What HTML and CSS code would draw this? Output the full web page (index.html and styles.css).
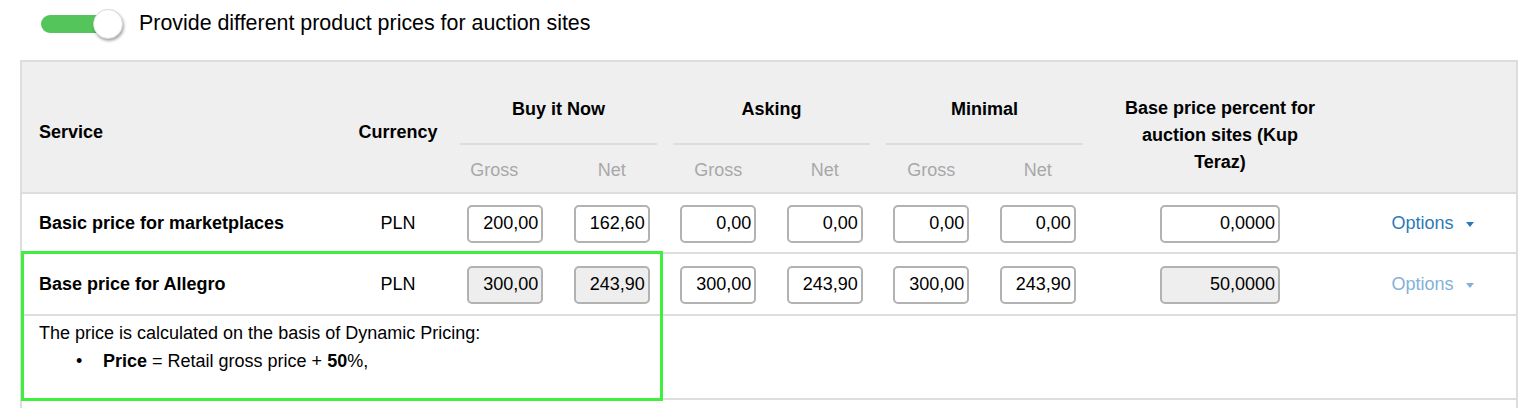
FILE: index.html
```html
<!DOCTYPE html>
<html lang="en">
<head>
  <meta charset="UTF-8">
  <title>Auction prices</title>
  <link rel="stylesheet" href="styles.css">
</head>
<body>
  <div class="page">
    <div class="auction-toggle">
      <span class="switch">
        <span class="switch-track"></span>
        <span class="switch-knob"></span>
      </span>
      <span class="auction-toggle-label">Provide different product prices for auction sites</span>
    </div>

    <div class="price-table-wrap">
      <table class="price-table">
        <colgroup>
          <col class="w-service">
          <col class="w-currency">
          <col class="w-sub"><col class="w-sub">
          <col class="w-sub"><col class="w-sub">
          <col class="w-sub"><col class="w-sub">
          <col class="w-percent">
          <col class="w-options">
        </colgroup>
        <thead>
          <tr class="head-main">
            <th rowspan="2" class="col-service">Service</th>
            <th rowspan="2" class="col-currency">Currency</th>
            <th colspan="2" class="col-group"><div class="group-title">Buy it Now</div></th>
            <th colspan="2" class="col-group"><div class="group-title">Asking</div></th>
            <th colspan="2" class="col-group"><div class="group-title">Minimal</div></th>
            <th rowspan="2" class="col-percent">Base price percent for auction sites (Kup Teraz)</th>
            <th rowspan="2"></th>
          </tr>
          <tr class="head-sub">
            <th class="sub-first">Gross</th><th>Net</th>
            <th>Gross</th><th>Net</th>
            <th>Gross</th><th>Net</th>
          </tr>
        </thead>
        <tbody>
          <tr class="row-price">
            <td class="col-service">Basic price for marketplaces</td>
            <td class="col-currency">PLN</td>
            <td><input class="price-input" type="text" value="200,00"></td>
            <td><input class="price-input" type="text" value="162,60"></td>
            <td><input class="price-input" type="text" value="0,00"></td>
            <td><input class="price-input" type="text" value="0,00"></td>
            <td><input class="price-input" type="text" value="0,00"></td>
            <td><input class="price-input" type="text" value="0,00"></td>
            <td><input class="price-input wide" type="text" value="0,0000"></td>
            <td><a class="options-link" href="#">Options<span class="caret"></span></a></td>
          </tr>
          <tr class="row-price row-allegro">
            <td class="col-service">Base price for Allegro</td>
            <td class="col-currency">PLN</td>
            <td><input class="price-input" type="text" value="300,00" disabled></td>
            <td><input class="price-input" type="text" value="243,90" disabled></td>
            <td><input class="price-input" type="text" value="300,00"></td>
            <td><input class="price-input" type="text" value="243,90"></td>
            <td><input class="price-input" type="text" value="300,00"></td>
            <td><input class="price-input" type="text" value="243,90"></td>
            <td><input class="price-input wide" type="text" value="50,0000" disabled></td>
            <td><a class="options-link is-disabled" href="#">Options<span class="caret"></span></a></td>
          </tr>
          <tr class="row-note">
            <td colspan="10">
              The price is calculated on the basis of Dynamic Pricing:
              <ul class="note-list">
                <li><b>Price</b> = Retail gross price + <b>50</b>%,</li>
              </ul>
            </td>
          </tr>
        </tbody>
      </table>
      <div class="highlight-box"></div>
    </div>
  </div>
</body>
</html>
```

FILE: styles.css
```css
body {
    margin: 0;
    font-family: "Liberation Sans", Arial, sans-serif;
    font-size: 18px;
    color: #000;
    background: #fff;
}

.page {
    padding: 8px 22px 0 20px;
}

/* toggle on top */
.auction-toggle {
    display: flex;
    align-items: center;
    gap: 15px;
    height: 32px;
    margin-left: 21px;
}

.switch {
    position: relative;
    display: flex;
    align-items: center;
    width: 83px;
    height: 32px;
}

.switch-track {
    width: 70px;
    height: 18px;
    border-radius: 9px;
    background: #53c55b;
}

.switch-knob {
    position: absolute;
    right: 1px;
    top: 1px;
    width: 30px;
    height: 30px;
    box-sizing: border-box;
    border-radius: 50%;
    background: #fff;
    border: 1px solid #d8d8d8;
    box-shadow: 1px 2px 3px rgba(0, 0, 0, 0.35);
}

.auction-toggle-label {
    font-size: 21.4px;
    margin-top: -2px;
}

/* table */
.price-table-wrap {
    position: relative;
    margin-top: 20px;
    border: 2px solid #ddd;
    border-bottom: none;
    padding-bottom: 30px;
}

.price-table {
    width: 100%;
    table-layout: fixed;
    border-collapse: separate;
    border-spacing: 0;
}

.w-service { width: 322px; }
.w-currency { width: 108px; }
.w-sub { width: 106.5px; }
.w-percent { width: 258px; }
.w-options { width: 167px; }

.price-table th,
.price-table td {
    padding: 0;
    border-bottom: 2px solid #ddd;
    text-align: center;
    vertical-align: middle;
}

.price-table thead th {
    background: #efefef;
    font-weight: bold;
    line-height: 27px;
}

.head-main { height: 83px; }
.head-sub { height: 49px; }

.price-table .head-main .col-group {
    border-bottom: none;
    vertical-align: bottom;
    padding: 0 8px;
}

.group-title {
    padding-bottom: 20px;
    border-bottom: 2px solid #ddd;
}

.price-table .head-sub th {
    font-weight: normal;
    color: #a8a8a8;
    padding-top: 4px;
}

.price-table .head-sub .sub-first {
    padding-right: 22px;
}

.price-table .col-service {
    text-align: left;
    padding-left: 17px;
}

.price-table thead .col-service,
.price-table thead .col-currency {
    padding-top: 10px;
}

.price-table .col-percent {
    padding: 17px 29px 0;
}

.row-price { height: 60px; }
.row-allegro { height: 62px; }

.row-price td {
    padding-top: 1px;
}

.row-price .col-service {
    font-weight: bold;
}

.price-input {
    width: 76px;
    height: 38px;
    box-sizing: border-box;
    border: 2px solid #b2b2b2;
    border-radius: 5px;
    padding: 0 3px 0 0;
    font-family: inherit;
    font-size: 18px;
    color: #000;
    text-align: right;
    background: #fff;
}

.price-input.wide {
    width: 120px;
}

.price-input:disabled {
    background: #eee;
    color: #000;
}

.options-link {
    color: #2c79b7;
    text-decoration: none;
}

.options-link.is-disabled {
    color: #82b1d9;
}

.caret {
    display: inline-block;
    margin-left: 12px;
    vertical-align: middle;
    border-top: 5px solid currentColor;
    border-left: 4px solid transparent;
    border-right: 4px solid transparent;
}

.row-note { height: 84px; }

.price-table .row-note td {
    text-align: left;
    vertical-align: top;
    padding: 3px 0 0 17px;
    line-height: 28px;
}

.note-list {
    margin: 0;
    padding-left: 37px;
    list-style: none;
}

.note-list li::before {
    content: "\2022";
    display: inline-block;
    width: 27px;
}

/* annotation frame */
.highlight-box {
    position: absolute;
    left: -1px;
    top: 189px;
    width: 642px;
    height: 150px;
    box-sizing: border-box;
    border: 3px solid #3df03d;
    pointer-events: none;
}
```
